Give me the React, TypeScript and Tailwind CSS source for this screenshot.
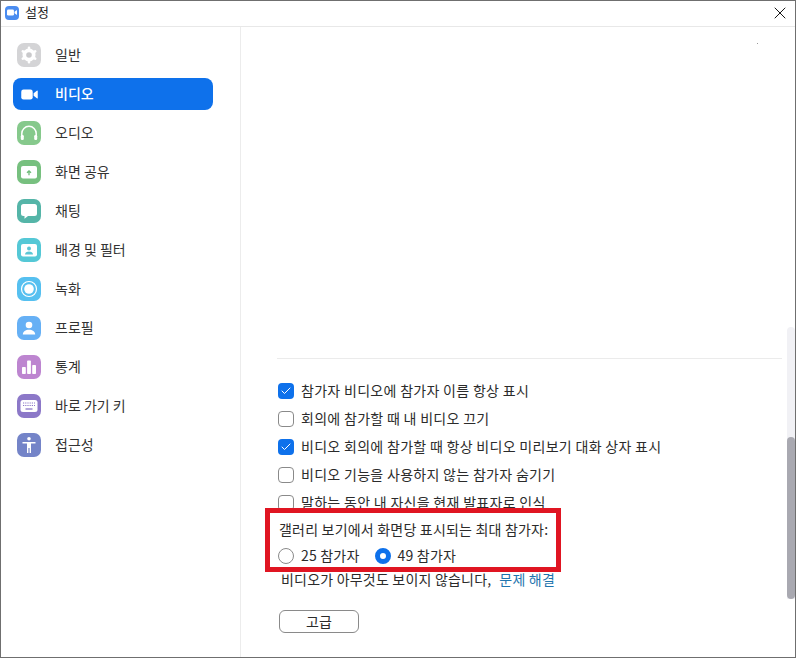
import React from 'react';
import { Check, X } from 'lucide-react';

const font = "font-['Noto_Sans_CJK_KR','Noto_Sans',sans-serif]";

const Tile: React.FC<{ color: string; children: React.ReactNode }> = ({ color, children }) => (
  <span className={`w-6 h-6 rounded-[7px] shrink-0 flex items-center justify-center ${color}`}>
    <svg width="24" height="24" viewBox="0 0 24 24" fill="none">{children}</svg>
  </span>
);

const VideoGlyph = () => (
  <svg width="17" height="11" viewBox="0 0 18 12" fill="#fff">
    <rect x="0" y="0.5" width="12.5" height="11" rx="2.5" />
    <path d="M13.5 4.6 17 1.8c.4-.3 1 0 1 .5v7.400c0 .5-.6.8-1 .5l-3.500-2.800z" />
  </svg>
);

const navItems: { label: string; icon: React.ReactNode; active?: boolean }[] = [
  {
    label: '일반',
    icon: (
      <Tile color="bg-[#d4d4d6]">
        <circle cx="12" cy="12" r="6.500" fill="#fff" />
        <circle cx="12" cy="12" r="2.800" fill="#c9c9cb" />
        <g stroke="#fff" strokeWidth="2.600" strokeLinecap="round">
          <path d="M12 4.800v1M12 18.200v1M5.800 8.400l.9.5M17.300 15.100l.9.5M5.800 15.600l.9-.5M17.300 8.900l.9-.5" />
        </g>
      </Tile>
    ),
  },
  { label: '비디오', active: true, icon: <span className="w-6 h-6 shrink-0 flex items-center justify-center"><VideoGlyph /></span> },
  {
    label: '오디오',
    icon: (
      <Tile color="bg-[#86c98c]">
        <path d="M4.800 17v-4.500a7.200 7.200 0 0 1 14.400 0V17" stroke="#fff" strokeWidth="1.500" />
        <rect x="3.800" y="14" width="3" height="5" rx="1.200" fill="#fff" />
        <rect x="17.200" y="14" width="3" height="5" rx="1.200" fill="#fff" />
      </Tile>
    ),
  },
  {
    label: '화면 공유',
    icon: (
      <Tile color="bg-[#77c07f]">
        <rect x="4" y="6" width="16" height="12.500" rx="2" fill="#fff" />
        <path d="M12 15.200v-4M10 12.800l2-2 2 2" stroke="#6ebb78" strokeWidth="1.300" />
      </Tile>
    ),
  },
  {
    label: '채팅',
    icon: (
      <Tile color="bg-[#55b5a8]">
        <path d="M6.500 5h11A2.500 2.500 0 0 1 20 7.500v7a2.500 2.500 0 0 1-2.500 2.500H11l-3.500 2.800V17h-1A2.500 2.500 0 0 1 4 14.500v-7A2.500 2.500 0 0 1 6.500 5z" fill="#fff" />
      </Tile>
    ),
  },
  {
    label: '배경 및 필터',
    icon: (
      <Tile color="bg-[#55c8d6]">
        <rect x="4" y="6" width="16" height="12.500" rx="2" fill="#fff" />
        <circle cx="12" cy="10.500" r="2" fill="#5cc6d4" />
        <path d="M8 16.500c0-2 1.800-3 4-3s4 1 4 3z" fill="#5cc6d4" />
      </Tile>
    ),
  },
  {
    label: '녹화',
    icon: (
      <Tile color="bg-[#56c0f0]">
        <circle cx="12" cy="12" r="7.500" stroke="#fff" strokeWidth="1.200" />
        <circle cx="12" cy="12" r="4.800" fill="#fff" />
      </Tile>
    ),
  },
  {
    label: '프로필',
    icon: (
      <Tile color="bg-[#66b0f5]">
        <circle cx="12" cy="9" r="3.300" fill="#fff" />
        <path d="M5.800 18.500c0-3 2.800-4.800 6.200-4.800s6.200 1.800 6.200 4.800z" fill="#fff" />
      </Tile>
    ),
  },
  {
    label: '통계',
    icon: (
      <Tile color="bg-[#bd85d0]">
        <rect x="5" y="12" width="3.800" height="7" rx="0.800" fill="#fff" />
        <rect x="10.100" y="5.500" width="3.800" height="13.500" rx="0.800" fill="#fff" />
        <rect x="15.200" y="10" width="3.800" height="9" rx="0.800" fill="#fff" />
      </Tile>
    ),
  },
  {
    label: '바로 가기 키',
    icon: (
      <Tile color="bg-[#8c78c8]">
        <rect x="3.500" y="6" width="17" height="12" rx="2.500" fill="#fff" />
        <path d="M6 9h12M6 11.500h12" stroke="#8c78c8" strokeWidth="1.200" strokeDasharray="1.200 1" />
        <path d="M8.500 15h7" stroke="#8c78c8" strokeWidth="1.300" />
      </Tile>
    ),
  },
  {
    label: '접근성',
    icon: (
      <Tile color="bg-[#7484c8]">
        <circle cx="12" cy="5.800" r="1.800" fill="#fff" />
        <path d="M5.500 9h13v1.500H14V20h-1.400v-5h-1.200v5H10v-9.500H5.500z" fill="#fff" />
      </Tile>
    ),
  },
];

const options = [
  { label: '참가자 비디오에 참가자 이름 항상 표시', checked: true },
  { label: '회의에 참가할 때 내 비디오 끄기', checked: false },
  { label: '비디오 회의에 참가할 때 항상 비디오 미리보기 대화 상자 표시', checked: true },
  { label: '비디오 기능을 사용하지 않는 참가자 숨기기', checked: false },
  { label: '말하는 동안 내 자신을 현재 발표자로 인식', checked: false },
];

const CheckRow: React.FC<{ label: string; checked: boolean }> = ({ label, checked }) => (
  <div className="h-7 flex items-center gap-[7px]">
    {checked ? (
      <span className="w-4 h-4 rounded-[4px] bg-[#0e71eb] flex items-center justify-center">
        <Check size={12} strokeWidth={2} className="text-white" />
      </span>
    ) : (
      <span className="w-4 h-4 rounded-[4px] border border-[#8a8a8a] bg-white" />
    )}
    <span className="text-[14px] leading-5 pb-[3px] tracking-[0.3px] text-[#2b2b2b]">{label}</span>
  </div>
);

export default function App() {
  return (
    <div className={`${font} relative w-[796px] h-[658px] bg-white border border-[#6f6f6f] flex flex-col overflow-hidden`}>
      {/* Title bar */}
      <div className="h-[26px] shrink-0 border-b border-[#e8e8e8] pl-1 pr-[5px] pb-[2px] flex items-center">
        <span className="w-[14px] h-[14px] rounded-[4px] bg-[#4a8cf0] flex items-center justify-center">
          <svg width="10" height="7" viewBox="0 0 18 12" fill="#fff">
            <rect x="0" y="0.500" width="12.500" height="11" rx="2.500" />
            <path d="M13.500 4.600 18 1.500v9l-4.500-3.100z" />
          </svg>
        </span>
        <span className="ml-[6px] text-[13px] leading-4 pb-[1px] text-[#222]">설정</span>
        <X size={20} strokeWidth={1.100} className="ml-auto text-black" />
      </div>

      <div className="flex-1 flex min-h-0">
        {/* Sidebar */}
        <div className="w-[240px] shrink-0 border-r border-[#ececec] px-3 pt-[12px] flex flex-col gap-[7px]">
          {navItems.map(item => (
            <div
              key={item.label}
              className={`h-8 w-[200px] rounded-lg pl-[4px] flex items-center gap-[14px] ${item.active ? 'bg-[#0e71eb] text-white font-medium' : 'text-[#333]'}`}
            >
              {item.icon}
              <span className="text-[14px] leading-5 pb-[3px]">{item.label}</span>
            </div>
          ))}
        </div>

        {/* Video settings, scrolled to the bottom */}
        <div className="flex-1 min-w-0 pl-9 pr-[13px] pt-[331px]">
          <div className="h-px bg-[#ebebeb]" />
          <div className="mt-[18px] ml-px flex flex-col">
            {options.map(o => (
              <CheckRow key={o.label} {...o} />
            ))}
          </div>
          <p className="mt-[1px] h-6 flex items-center text-[14px] leading-5 pb-[3px] tracking-[0.2px] text-[#2b2b2b] ml-[2px]">갤러리 보기에서 화면당 표시되는 최대 참가자:</p>
          <div className="mt-[3px] ml-px h-[22px] flex items-center text-[14px] leading-5 tracking-[0.2px] text-[#2b2b2b]">
            <span className="w-4 h-4 rounded-full border border-[#8a8a8a] bg-white" />
            <span className="ml-[7px] pb-[2px]">25 참가자</span>
            <span className="ml-[15px] w-4 h-4 rounded-full border-[5px] border-[#0e71eb] bg-white" />
            <span className="ml-[7px] pb-[2px]">49 참가자</span>
          </div>
          <p className="mt-px h-6 ml-[4px] flex items-center text-[14px] leading-5 pb-[3px] tracking-[0.2px] text-[#2b2b2b]">
            비디오가 아무것도 보이지 않습니다,<span className="ml-[8px] text-[#1f75ae]">문제 해결</span>
          </p>
          <button className="mt-[18px] ml-[2px] w-20 h-[23px] rounded-[6px] border border-[#8a8a8a] bg-white text-[14px] leading-5 pb-[2px] text-[#2b2b2b] flex items-center justify-center">
            고급
          </button>
        </div>
      </div>

      {/* Stray speck in the scrolled-away area */}
      <span className="absolute left-[756px] top-[42px] w-px h-px bg-[#999]" />

      {/* Red highlight annotation */}
      <div className="absolute left-[264px] top-[507px] w-[296px] h-[64px] border-[5px] border-[#e01522] pointer-events-none" />

      {/* Overlay scrollbar */}
      <div className="absolute right-0 top-[326px] w-2 h-[272px] rounded-t-full bg-[#f1f1f5]">
        <div className="mt-[110px] h-[162px] rounded-full bg-[#a9a9b1]" />
      </div>
    </div>
  );
}
